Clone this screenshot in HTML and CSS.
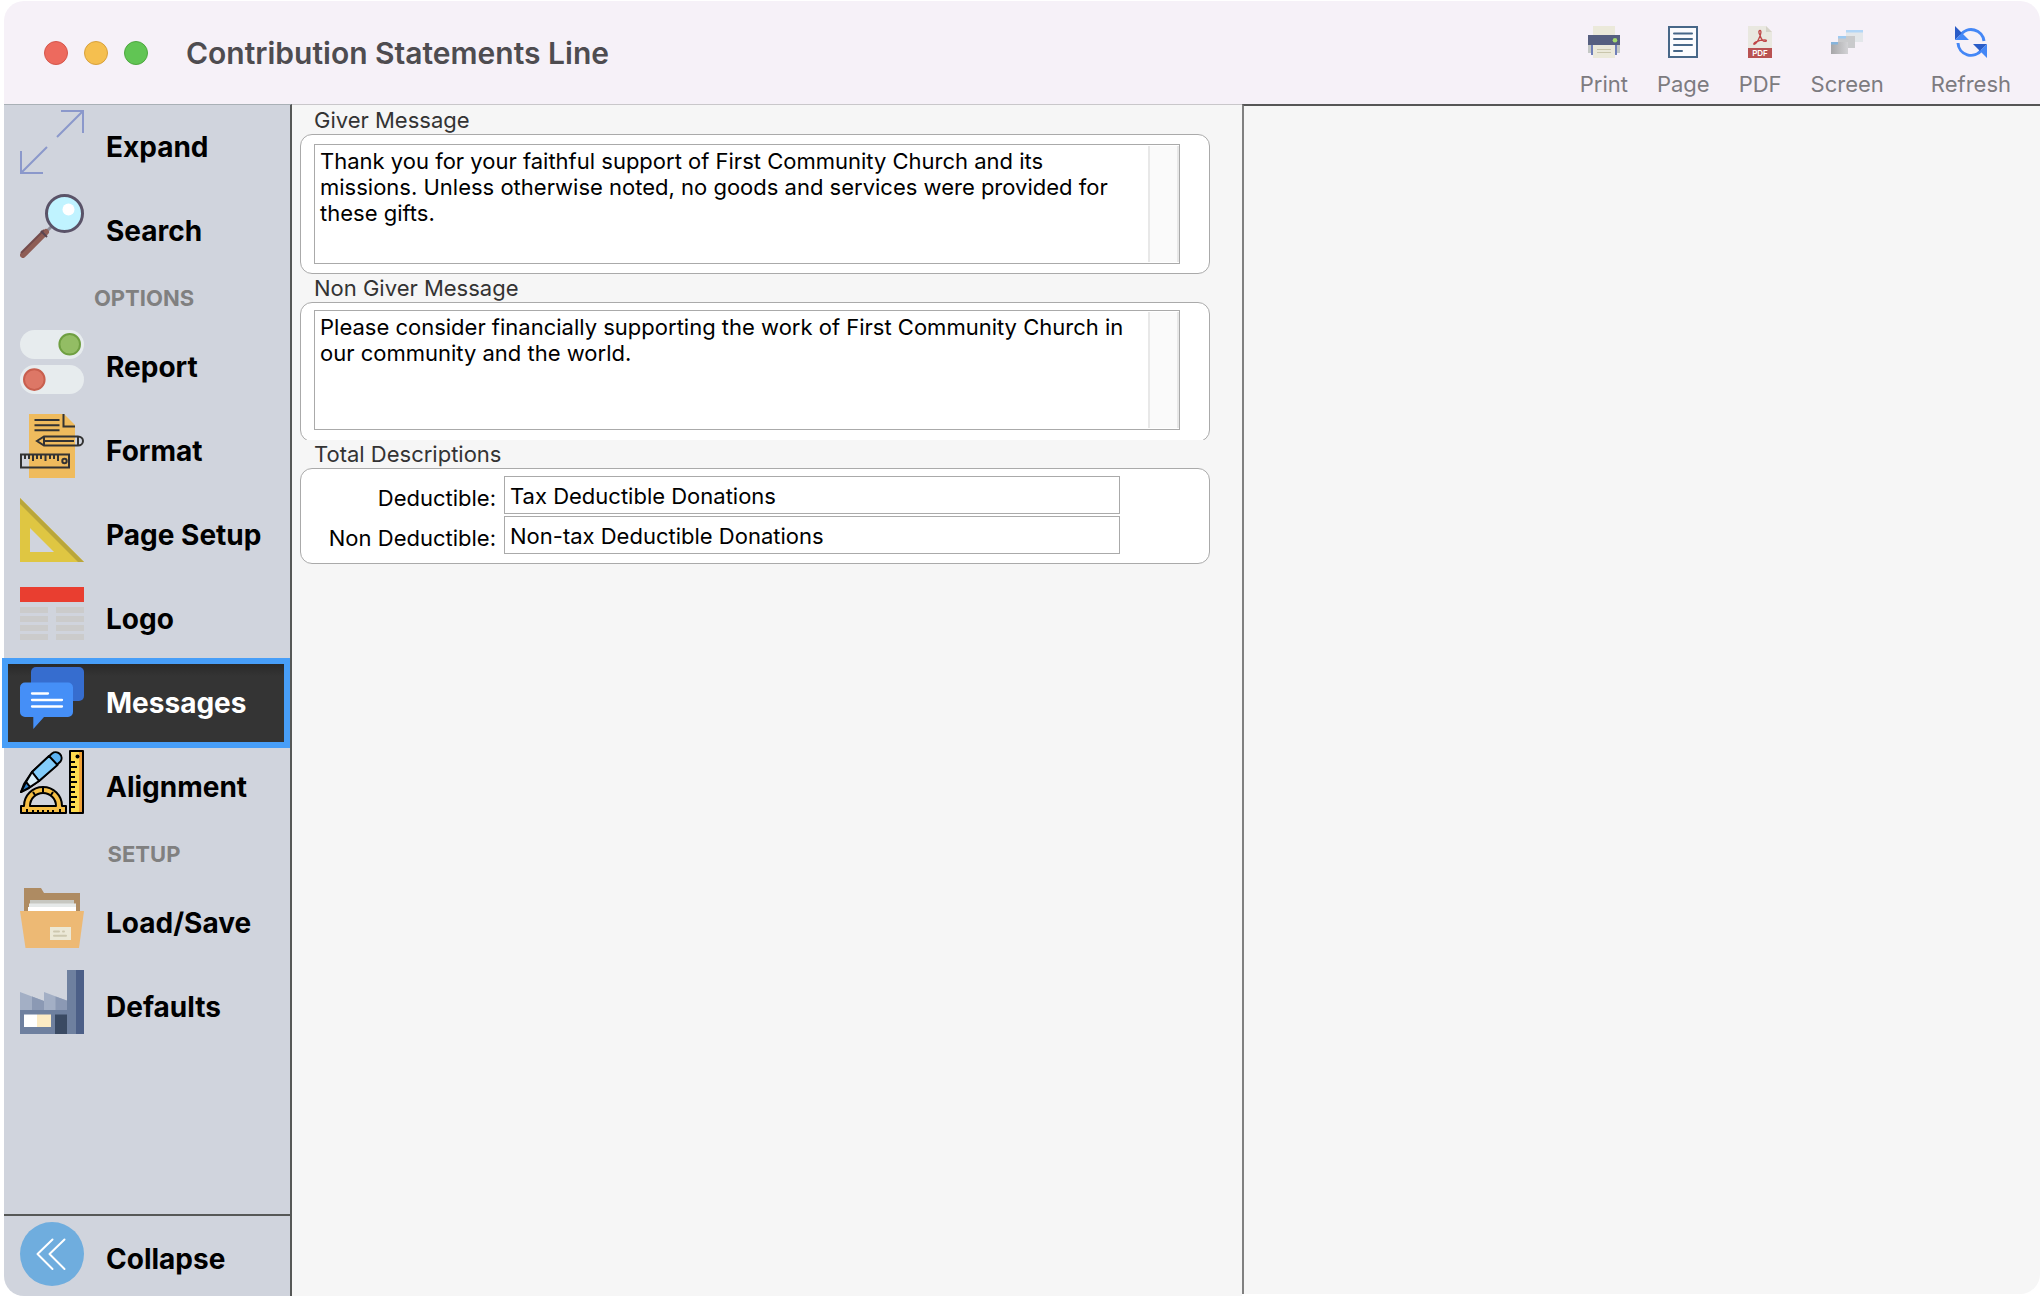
FILE: index.html
```html
<!DOCTYPE html>
<html lang="en">
<head>
<meta charset="utf-8">
<meta name="viewport" content="width=device-width, initial-scale=1">
<title>Contribution Statements Line</title>
<link rel="stylesheet" href="styles.css">
</head>
<body>
<div class="window">
  <header class="titlebar">
    <div class="lights">
      <button class="light light-close" type="button" aria-label="Close"></button>
      <button class="light light-minimize" type="button" aria-label="Minimize"></button>
      <button class="light light-zoom" type="button" aria-label="Zoom"></button>
    </div>
    <h1 class="title">Contribution Statements Line</h1>
    <div class="toolbar">
      <button class="tool" type="button">
        <svg class="tool-icon" viewBox="0 0 32 32" aria-hidden="true">
          <path fill="#ebe9da" d="M5 0h22v10H5z"/>
          <path fill="#c5c9c6" d="M0 19h5v8H0zM27 19h5v8h-5z"/>
          <path fill="#6f7fb8" d="M3 19h3v10H3zM26 19h3v10h-3z"/>
          <path fill="#565f80" d="M0 9h32v10H0z"/>
          <path fill="#ebe9da" d="M5 19h22v13H5z"/>
          <path stroke="#c9c6ac" d="M9 23.500h14M9 26.500h14"/>
          <circle cx="27" cy="14.300" r="2.300" fill="#a4dc6c"/>
        </svg>
        <span>Print</span>
      </button>
      <button class="tool" type="button">
        <svg class="tool-icon" viewBox="0 0 32 32" aria-hidden="true">
          <path fill="#fbfbfd" stroke="#476788" stroke-width="2" d="M2 1h28v30H2z"/>
          <path stroke="#476788" stroke-width="2" stroke-linecap="round" d="M7 7.500h18M7 13h18M7 19h18M7 25h8"/>
        </svg>
        <span>Page</span>
      </button>
      <button class="tool" type="button">
        <svg class="tool-icon" viewBox="0 0 32 32" aria-hidden="true">
          <path fill="#e9e8e0" d="M4 0h18l6 6v16H4z"/>
          <path fill="#d5d3c8" d="M22 0v6h6z"/>
          <path fill="none" stroke="#bf4747" stroke-width="1.300" d="M16 9c-1.500-2-1.500-4.500 0-4.500s1 3 0 5.500-3 7-5 8-1.500-1 1-2.200 6-2 8.500-2 2.500 1.700.5 1.600S17 13 16 9z"/>
          <path fill="#b95252" d="M4 22h24v10H4z"/>
          <text x="16" y="29.500" class="pdf-text" fill="#fff" text-anchor="middle">PDF</text>
        </svg>
        <span>PDF</span>
      </button>
      <button class="tool" type="button">
        <svg class="tool-icon" viewBox="0 0 32 32" aria-hidden="true">
          <defs>
            <linearGradient id="pane-dark" x2="1"><stop stop-color="#a6a6a8"/><stop offset="1" stop-color="#d2d2d5"/></linearGradient>
          </defs>
          <path fill="#e3e7ea" d="M15 4h17v12H15z"/><path fill="#b2d6f7" d="M15 4h17v2.500H15z"/>
          <path fill="#c9cacc" d="M7 10h17v12H7z"/><path fill="#9fcaf0" d="M7 10h8v2.500H7z"/>
          <path fill="url(#pane-dark)" d="M0 16h17v12H0z"/><path fill="#86b4dc" d="M0 16h7v2.500H0z"/>
        </svg>
        <span>Screen</span>
      </button>
      <button class="tool tool-refresh" type="button">
        <svg class="tool-icon" viewBox="0 0 32 32" aria-hidden="true">
          <path fill="none" stroke="#4487f6" stroke-width="3" d="M5.500 9A13 13 0 0 1 29 15M3 17a13 13 0 0 0 23.500 7"/>
          <path fill="#2a5cc7" d="M0 0v14l7-7zM18 18h14l-7 7z"/>
          <path fill="#4487f6" d="M0 14h14L7 7zM32 18v14l-7-7z"/>
        </svg>
        <span>Refresh</span>
      </button>
    </div>
  </header>

  <div class="body">
    <nav class="sidebar" aria-label="Sections">
      <div class="nav-list">
        <button class="nav-item" type="button">
          <svg class="nav-icon" viewBox="0 0 64 64" aria-hidden="true">
            <path fill="none" stroke="#8b98cb" stroke-width="2" d="M41 1h22v22M63 1 37 27M1 41v22h22M1 63l26-26"/>
          </svg>
          <span>Expand</span>
        </button>
        <button class="nav-item" type="button">
          <svg class="nav-icon" viewBox="0 0 64 64" aria-hidden="true">
            <path stroke="#8d8c98" stroke-width="3" d="m32 32-6 6"/>
            <path stroke="#8e5d55" stroke-width="6" stroke-linecap="round" d="M26 38 3 61"/>
            <path stroke="#744b4b" stroke-width="2" d="M24 36 1 59"/>
            <path stroke="#5a4550" stroke-width="2" d="m21 37 6 6"/>
            <circle cx="44.500" cy="19.500" r="18" fill="#c0f3ff" stroke="#5a5368" stroke-width="3"/>
            <circle cx="48.500" cy="15.500" r="6" fill="#fff"/>
          </svg>
          <span>Search</span>
        </button>
        <h2 class="nav-heading">OPTIONS</h2>
        <button class="nav-item" type="button">
          <svg class="nav-icon" viewBox="0 0 64 64" aria-hidden="true">
            <rect width="64" height="29" rx="14.500" fill="#e7ecee"/>
            <rect y="35" width="64" height="29" rx="14.500" fill="#e7ecee"/>
            <circle cx="49.700" cy="14.300" r="10.300" fill="#93bd64" stroke="#6f9f41" stroke-width="2"/>
            <circle cx="14.300" cy="49.600" r="10.300" fill="#dd7766" stroke="#c85f4e" stroke-width="2"/>
          </svg>
          <span>Report</span>
        </button>
        <button class="nav-item" type="button">
          <svg class="nav-icon" viewBox="0 0 64 64" aria-hidden="true">
            <path fill="#efbb5d" d="M9 0h35l11 11v53H9z"/>
            <g fill="none" stroke="#333" stroke-width="2">
              <path d="M43.500 0v12.500H55M14.500 6h25M14.500 11.300h25M14.500 16.300h25"/>
              <path d="M24 22.500h34a5 4.500 0 0 1 0 9H24l-7-4.500zM24 22.500v9M24 27h30M58 22.500v9"/>
              <path d="M1 40.500h48v13H1zM5 41v4M9 41v4M13 41v6M17 41v4M21 41v4M25.500 41v6M30 41v4M34 41v4M38 41v6"/>
              <circle cx="44.500" cy="47" r="2.200"/>
            </g>
          </svg>
          <span>Format</span>
        </button>
        <button class="nav-item" type="button">
          <svg class="nav-icon" viewBox="0 0 64 64" aria-hidden="true">
            <path fill="#dfc642" fill-rule="evenodd" d="M0 0l64 64H0zM10 30v24h24z"/>
            <path fill="#b9a63c" d="M0 0l64 64h-6L0 6z"/>
          </svg>
          <span>Page Setup</span>
        </button>
        <button class="nav-item" type="button">
          <svg class="nav-icon" viewBox="0 0 64 64" aria-hidden="true">
            <path fill="#e93e30" d="M0 5h64v15H0z"/>
            <path fill="#cbcbcb" d="M0 25h28v6H0zM36 25h28v6H36zM0 34h28v6H0zM36 34h28v6H36zM0 43h28v6H0zM36 43h28v6H36zM0 52h28v6H0zM36 52h28v6H36z"/>
          </svg>
          <span>Logo</span>
        </button>
        <button class="nav-item nav-item-active" type="button" aria-current="page">
          <svg class="nav-icon" viewBox="0 0 64 64" aria-hidden="true">
            <rect x="11" y="1" width="53" height="34" rx="5" fill="#366dcf"/>
            <path fill="#458ff7" d="M5 16.500h43a5 5 0 0 1 5 5V46a5 5 0 0 1-5 5H24L13.300 63V51H5a5 5 0 0 1-5-5V21.500a5 5 0 0 1 5-5z"/>
            <path stroke="#fff" stroke-width="2.300" stroke-linecap="round" d="M12 27.500h16M12 34h30M12 40.500h30"/>
          </svg>
          <span>Messages</span>
        </button>
        <button class="nav-item" type="button">
          <svg class="nav-icon" viewBox="0 0 64 64" aria-hidden="true">
            <g stroke="#000" stroke-width="2" stroke-linejoin="round">
              <path fill="#5db3f3" d="M32 3.500a5.900 5.900 0 0 1 8.500 8L19 31 9 38l-8 4 3-8 8-12z"/>
              <path fill="#83cdfb" d="m12 22 17-16 8.500 9L19 31z"/>
              <path fill="#d8edf8" d="m12 22 7 9-9 6-4-5z"/>
              <path fill="#2d7fc7" d="m6 32 4 5-9 5z"/>
              <path fill="#f6bf45" fill-rule="evenodd" d="M1 56h3a19 19 0 0 1 38 0h4v7H1zM10 56h26a13 13 0 0 0-26 0z"/>
              <path fill="#ffdc4f" d="M50 1h13v62H50z"/>
            </g>
            <path fill="#f2a338" d="M59 2h3v60h-3z"/>
            <path fill="none" stroke="#000" stroke-width="2" d="M50 12h5M50 17h7M50 22h5M50 27h5M50 32h7M50 37h5M50 42h5M50 47h7M50 52h5M50 57h5M7 63v-4M13 63v-3M18 63v-3M23 63v-3M28 63v-3M33 63v-3M40 63v-4M23 38v4M13 42l2 3M33 42l-2 3"/>
            <circle cx="57.500" cy="6.500" r="2"/>
          </svg>
          <span>Alignment</span>
        </button>
        <h2 class="nav-heading">SETUP</h2>
        <button class="nav-item" type="button">
          <svg class="nav-icon" viewBox="0 0 64 64" aria-hidden="true">
            <path fill="#ae8b62" d="M4 2h17l3 5h36v20H4z"/>
            <path fill="#c6c7c1" d="M10 14h44v6H10z"/>
            <path fill="#e5e9e9" d="M9 17.500h47V22H9z"/>
            <path fill="#fff" d="M8 21h48v5H8z"/>
            <path fill="#edb974" d="M0 25h64l-5 37H5.500z"/>
            <path fill="#ebe8d6" d="M30 41h21v13H30z"/>
            <path stroke="#cdc8af" stroke-width="2" stroke-linecap="round" d="M34 45.500h5M43 45.500h1M34 49.700h12"/>
          </svg>
          <span>Load/Save</span>
        </button>
        <button class="nav-item" type="button">
          <svg class="nav-icon" viewBox="0 0 64 64" aria-hidden="true">
            <path fill="#a3afc5" d="M0 22l24 9v-9l24 9v10H0z"/>
            <path fill="#8b99b4" d="M12 26.500l12 4.500v10H12zM35.500 26.500 48 31v10H35.500z"/>
            <path fill="#6e809f" d="M0 40h47V0h9v64H0z"/>
            <path fill="#4c5f87" d="M56 0h8v64h-8z"/>
            <path fill="#fff" d="M4 44.500h13V57H4z"/>
            <path fill="#fcebc4" d="M17 44.500h14V57H17z"/>
            <path fill="#3a4a63" d="M35 44.500h12V64H35z"/>
          </svg>
          <span>Defaults</span>
        </button>
      </div>
      <div class="nav-footer">
        <button class="nav-item" type="button">
          <svg class="nav-icon" viewBox="0 0 64 64" aria-hidden="true">
            <circle cx="32" cy="32" r="32" fill="#6fadde"/>
            <path fill="none" stroke="#fff" stroke-width="2" stroke-linecap="round" stroke-linejoin="round" d="M32.500 17.500 17.500 32l15 15M44.500 17.500 29.500 32l15 15"/>
          </svg>
          <span>Collapse</span>
        </button>
      </div>
    </nav>

    <main class="editor">
      <section class="group">
        <label class="group-label" for="giver">Giver Message</label>
        <div class="card card-first">
          <div class="message-box">
            <textarea class="message" id="giver" spellcheck="false">Thank you for your faithful support of First Community Church and its missions. Unless otherwise noted, no goods and services were provided for these gifts.</textarea>
            <div class="scroll-track"></div>
          </div>
        </div>
      </section>
      <section class="group">
        <label class="group-label" for="non-giver">Non Giver Message</label>
        <div class="card card-second">
          <div class="message-box">
            <textarea class="message" id="non-giver" spellcheck="false">Please consider financially supporting the work of First Community Church in our community and the world.</textarea>
            <div class="scroll-track"></div>
          </div>
        </div>
      </section>
      <section class="group group-totals">
        <h2 class="group-label">Total Descriptions</h2>
        <div class="card card-fields">
          <label class="field-label" for="deductible">Deductible:</label>
          <input class="field" id="deductible" type="text" value="Tax Deductible Donations">
          <label class="field-label" for="non-deductible">Non Deductible:</label>
          <input class="field" id="non-deductible" type="text" value="Non-tax Deductible Donations">
        </div>
      </section>
    </main>

    <aside class="preview" aria-label="Preview"></aside>
  </div>
</div>
</body>
</html>
```
FILE: styles.css
```css
* {
  box-sizing: border-box;
}

body {
  margin: 0;
  background: #fff;
  font-family: Inter, "Liberation Sans", sans-serif;
  font-size: 22px;
  line-height: 26px;
  color: #000;
}

button,
input,
textarea {
  font: inherit;
  color: inherit;
}

button {
  padding: 0;
  border: 0;
  background: none;
}

.window {
  display: flex;
  flex-direction: column;
  min-height: 100vh;
  padding: 1px 2px 0 4px;
}

/* Title bar */
.titlebar {
  display: flex;
  align-items: center;
  height: 103px;
  padding: 0 29px 0 40px;
  border-radius: 20px 20px 0 0;
  background: #f6f1f8;
}

.lights {
  display: flex;
  gap: 16px;
}

.light {
  width: 24px;
  height: 24px;
  border: 1px solid;
  border-radius: 50%;
}

.light-close {
  background: #ed6a5e;
  border-color: #d5564b;
}

.light-minimize {
  background: #f5bf4f;
  border-color: #d8a13c;
}

.light-zoom {
  background: #61c554;
  border-color: #4da73f;
}

.title {
  margin: 0 auto 0 38px;
  font-size: 30px;
  font-weight: 600;
  line-height: 36px;
  color: #4e4c50;
}

.toolbar {
  display: flex;
  gap: 29px;
  padding-top: 18px;
}

.tool {
  display: flex;
  flex-direction: column;
  align-items: center;
  gap: 13px;
  color: #7d7b80;
}

.tool-refresh {
  margin-left: 18px;
}

.tool-icon {
  width: 32px;
  height: 32px;
}

.pdf-text {
  font-size: 8px;
  font-weight: 600;
}

/* Body columns */
.body {
  display: grid;
  flex: 1;
  grid-template-columns: 288px minmax(0, 950px) minmax(0, 1fr);
}

/* Sidebar */
.sidebar {
  display: flex;
  flex-direction: column;
  border-top: 1px solid #a9b0b6;
  border-right: 2px solid #565857;
  border-bottom-left-radius: 20px;
  background: #d0d4dd;
}

.nav-list {
  flex: 1;
  padding-top: 1px;
}

.nav-item {
  display: flex;
  gap: 22px;
  width: 100%;
  height: 84px;
  padding: 4px 0 0 16px;
  font-size: 28px;
  font-weight: 700;
  line-height: 74px;
  text-align: left;
}

.nav-icon {
  flex: none;
  width: 64px;
  height: 64px;
}

.nav-item-active {
  position: relative;
  width: calc(100% + 2px);
  height: 90px;
  margin: -4px 0 -2px -2px;
  padding: 2px 0 0 12px;
  border: 6px solid #479ef8;
  background: linear-gradient(#292929, #343434 12px);
  color: #fff;
}

.nav-heading {
  height: 52px;
  margin: 0 6px 0 0;
  font-size: 22px;
  font-weight: 700;
  line-height: 48px;
  text-align: center;
  color: #808080;
}

.nav-footer {
  height: 82px;
  padding-top: 2px;
  border-top: 2px solid #565857;
}

/* Message editor */
.editor {
  padding: 1px 32px 0 8px;
  border-top: 1px solid #c9c7ca;
  background: #f6f6f6;
}

.group-label {
  display: block;
  height: 28px;
  margin: 0;
  padding: 1px 14px;
  font-size: 22px;
  font-weight: 400;
  color: #333;
}

.group-totals {
  position: relative;
  margin-top: -2px;
  background: #f6f6f6;
}

.card {
  padding: 7px 29px 9px 13px;
  border: 1px solid #aaa;
  border-radius: 12px;
  background: #fff;
}

.card-first {
  padding-top: 9px;
}

.card-second {
  padding-bottom: 11px;
}

.message-box {
  display: flex;
  height: 120px;
  border: 1px solid #aaa;
}

.message {
  flex: 1;
  min-width: 0;
  margin: 0;
  padding: 3px 5px;
  border: 0;
  outline: 0;
  background: #fff;
  overflow: hidden;
  resize: none;
}

.scroll-track {
  width: 31px;
  margin: 1px 0;
  border: solid #e8e8e8;
  border-width: 0 2px;
  background: #fafafa;
}

.card-fields {
  display: grid;
  grid-template-columns: 182px minmax(0, 616px);
  gap: 2px 8px;
}

.field-label {
  padding-top: 9px;
  text-align: right;
  white-space: nowrap;
}

.field {
  width: 100%;
  height: 38px;
  padding: 2px 5px 0;
  border: 1px solid #aaa;
  outline: 0;
  background: #fff;
}

/* Preview pane */
.preview {
  margin-bottom: 2px;
  border-top: 2px solid #565656;
  border-left: 2px solid #808080;
  border-bottom-right-radius: 20px;
  background: #f6f6f6;
}
```
